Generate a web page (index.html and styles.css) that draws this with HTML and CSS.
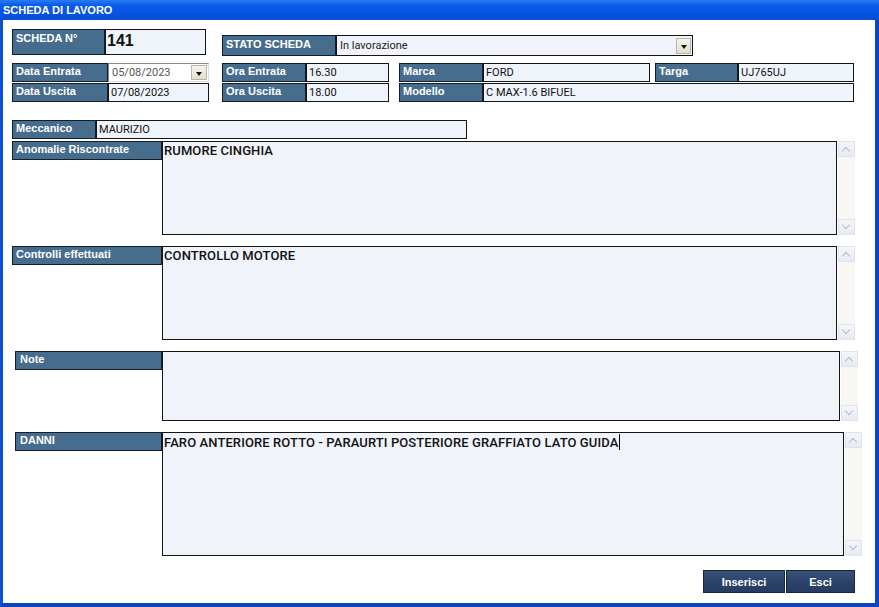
FILE: index.html
```html
<!DOCTYPE html>
<html lang="it">
<head>
<meta charset="utf-8">
<title>Scheda di lavoro</title>
<link rel="stylesheet" href="styles.css">
</head>
<body>
<div class="window">
  <div class="titlebar">SCHEDA DI LAVORO</div>
  <div class="frame">
    <div class="row row-top">
      <div class="group">
        <div class="label lbl-scheda">SCHEDA N°</div>
        <div class="value val-scheda">141</div>
      </div>
      <div class="group group-stato">
        <div class="label lbl-stato">STATO SCHEDA</div>
        <div class="select">
          <span class="select-text">In lavorazione</span>
          <span class="dd-btn"><span class="tri"></span></span>
        </div>
      </div>
    </div>

    <div class="row row-b">
      <div class="group g1">
        <div class="label w96">Data Entrata</div>
        <div class="date-input">
          <span class="date-text">05/08/2023</span>
          <span class="dd-btn small"><span class="tri"></span></span>
        </div>
      </div>
      <div class="group g2">
        <div class="label w84">Ora Entrata</div>
        <div class="value w83">16.30</div>
      </div>
      <div class="group g3">
        <div class="label w84">Marca</div>
        <div class="value w167">FORD</div>
      </div>
      <div class="group g4">
        <div class="label w83">Targa</div>
        <div class="value w116">UJ765UJ</div>
      </div>
    </div>

    <div class="row row-c">
      <div class="group g1">
        <div class="label w96">Data Uscita</div>
        <div class="value w101">07/08/2023</div>
      </div>
      <div class="group g2">
        <div class="label w84">Ora Uscita</div>
        <div class="value w83">18.00</div>
      </div>
      <div class="group g3">
        <div class="label w84">Modello</div>
        <div class="value w371">C MAX-1.6 BIFUEL</div>
      </div>
    </div>

    <div class="row row-mecc">
      <div class="group">
        <div class="label w84">Meccanico</div>
        <div class="value w371">MAURIZIO</div>
      </div>
    </div>

    <div class="block block-anom">
      <div class="label big-label">Anomalie Riscontrate</div>
      <div class="area a-anom">RUMORE CINGHIA</div>
      <div class="scroll"><span class="sb-btn up"></span><span class="sb-track"></span><span class="sb-btn down"></span></div>
    </div>

    <div class="block block-ctrl">
      <div class="label big-label">Controlli effettuati</div>
      <div class="area a-ctrl">CONTROLLO MOTORE</div>
      <div class="scroll"><span class="sb-btn up"></span><span class="sb-track"></span><span class="sb-btn down"></span></div>
    </div>

    <div class="block block-note">
      <div class="label big-label narrow">Note</div>
      <div class="area a-note"></div>
      <div class="scroll"><span class="sb-btn up"></span><span class="sb-track"></span><span class="sb-btn down"></span></div>
    </div>

    <div class="block block-danni">
      <div class="label big-label narrow">DANNI</div>
      <div class="area a-danni">FARO ANTERIORE ROTTO - PARAURTI POSTERIORE GRAFFIATO LATO GUIDA<span class="caret"></span></div>
      <div class="scroll"><span class="sb-btn up"></span><span class="sb-track"></span><span class="sb-btn down"></span></div>
    </div>

    <div class="buttons">
      <button class="btn btn-ins">Inserisci</button>
      <button class="btn btn-esci">Esci</button>
    </div>
  </div>
</div>
</body>
</html>
```

FILE: styles.css
```css
* { box-sizing: border-box; }

html, body {
  margin: 0;
  padding: 0;
  background: #ffffff;
}

body {
  font-family: "Liberation Sans", Arial, sans-serif;
  width: 879px;
  height: 607px;
  overflow: hidden;
}

.window {
  width: 879px;
  height: 607px;
  display: flex;
  flex-direction: column;
}

.titlebar {
  height: 20px;
  flex: none;
  background: linear-gradient(to bottom, #2a7bf4 0%, #0b5de8 25%, #0552e0 70%, #0a4fd4 100%);
  color: #ffffff;
  font-weight: bold;
  font-size: 11px;
  line-height: 21px;
  padding-left: 3px;
}

.frame {
  flex: 1;
  border-left: 3px solid #0b4fd6;
  border-right: 4px solid #0b45c8;
  border-bottom: 4px solid #0a44c4;
  background: #ffffff;
  padding: 9px 0 0 9px;
  display: flex;
  flex-direction: column;
}

.row {
  display: flex;
  align-items: flex-start;
}

.group {
  display: flex;
}

.label {
  background: #476d8e;
  border: 1px solid #151d28;
  color: #ffffff;
  font-weight: bold;
  font-size: 11px;
  line-height: 13px;
  padding: 1px 3px 0 3px;
  height: 19px;
  white-space: nowrap;
}

.value {
  background: #eff3fa;
  border: 1px solid #141414;
  height: 19px;
  font-family: Roboto, "Liberation Sans", sans-serif;
  font-size: 11px;
  line-height: 17px;
  padding-left: 2px;
  color: #111111;
  white-space: nowrap;
}

/* Row top */
.row-top { height: 27px; }
.lbl-scheda {
  width: 93px;
  height: 26px;
  padding-top: 2px;
}
.val-scheda {
  width: 101px;
  height: 26px;
  font-family: "Liberation Sans", Arial, sans-serif;
  font-weight: bold;
  font-size: 16px;
  line-height: 22px;
  padding-left: 1px;
}
.group-stato {
  margin-left: 16px;
  margin-top: 6px;
}
.lbl-stato {
  width: 114px;
  height: 21px;
  padding-top: 2px;
}
.select {
  width: 357px;
  height: 21px;
  border: 1px solid #141414;
  background: #f0f3fb;
  display: flex;
  align-items: center;
  justify-content: space-between;
  padding: 0 1px 0 3px;
}
.select-text {
  font-family: Roboto, "Liberation Sans", sans-serif;
  font-size: 11px;
  color: #222222;
}

.dd-btn {
  width: 15px;
  height: 16px;
  background: linear-gradient(to bottom, #f6f4ec, #e2dece);
  border: 1px solid #b9b6a8;
  display: flex;
  align-items: center;
  justify-content: center;
}
.dd-btn.small {
  width: 16px;
  height: 15px;
}
.tri {
  width: 0;
  height: 0;
  border-left: 3px solid transparent;
  border-right: 3px solid transparent;
  border-top: 4px solid #111111;
  margin-top: 2px;
}

/* Rows B & C */
.row-b { margin-top: 7px; }
.row-c { margin-top: 1px; }
.g2 { margin-left: 13px; }
.g3 { margin-left: 10px; }
.g4 { margin-left: 5px; }

.w96 { width: 96px; }
.w84 { width: 84px; }
.w83 { width: 83px; }
.w101 { width: 101px; }
.w116 { width: 116px; }
.w167 { width: 167px; }
.w371 { width: 371px; }

.date-input {
  width: 101px;
  height: 19px;
  background: #ffffff;
  border-top: 1px solid #8a8a8a;
  border-left: 1px solid #8a8a8a;
  border-right: 1px solid #dcdcdc;
  border-bottom: 1px solid #dcdcdc;
  display: flex;
  align-items: center;
  justify-content: space-between;
  padding: 0 1px 0 3px;
}
.date-text {
  font-family: Roboto, "Liberation Sans", sans-serif;
  font-size: 11px;
  color: #555555;
}

.row-mecc { margin-top: 18px; }

/* Text blocks */
.block {
  display: flex;
  align-items: flex-start;
}
.block-anom { margin-top: 2px; }
.block-ctrl { margin-top: 11px; }
.block-note { margin-top: 11px; }
.block-danni { margin-top: 11px; }

.big-label {
  width: 150px;
  height: 19px;
}
.big-label.narrow {
  width: 147px;
  margin-left: 3px;
  padding-left: 4px;
}

.area {
  background: #f0f3fa;
  border: 1px solid #141414;
  font-family: Roboto, "Liberation Sans", sans-serif;
  font-weight: 500;
  font-size: 13px;
  line-height: 16px;
  letter-spacing: 0.1px;
  color: #111111;
  padding: 1px 1px;
  white-space: nowrap;
}
.a-anom, .a-ctrl { width: 675px; height: 94px; }
.a-note { width: 678px; height: 70px; }
.a-danni { width: 682px; height: 124px; }

.caret {
  display: inline-block;
  width: 1px;
  height: 16px;
  background: #000000;
  vertical-align: -3px;
  margin-left: 1px;
}

.scroll {
  width: 17px;
  margin-left: 1px;
  display: flex;
  flex-direction: column;
  background: #f8f7f3;
  align-self: stretch;
}
.sb-track { flex: 1; }
.sb-btn {
  height: 16px;
  background: linear-gradient(to bottom, #f4f6fb, #e6ebf3);
  border: 1px solid #e0e4ea;
  position: relative;
}
.sb-btn::after {
  content: "";
  position: absolute;
  left: 4px;
  top: 4px;
  width: 5px;
  height: 5px;
  border-left: 1.5px solid #b2bccb;
  border-top: 1.5px solid #b2bccb;
}
.sb-btn.up::after { transform: rotate(45deg); top: 6px; }
.sb-btn.down::after { transform: rotate(-135deg); top: 2px; }

/* Buttons */
.buttons {
  display: flex;
  margin-top: 14px;
  margin-left: 691px;
  gap: 1px;
}
.btn {
  height: 23px;
  border: 1px solid #1a2638;
  background: linear-gradient(to bottom, #37517a 0%, #2c446a 50%, #263c60 100%);
  color: #ffffff;
  font-family: "Liberation Sans", Arial, sans-serif;
  font-weight: bold;
  font-size: 11px;
  padding: 0;
  cursor: default;
}
.btn-ins { width: 82px; }
.btn-esci { width: 69px; }
```
